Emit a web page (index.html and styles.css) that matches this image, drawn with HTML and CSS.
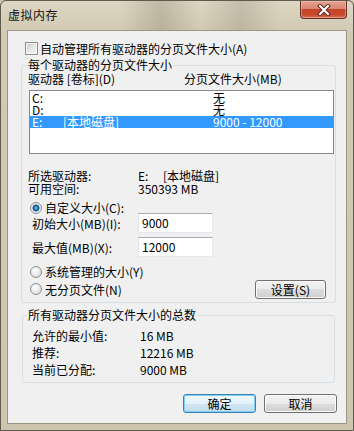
FILE: index.html
```html
<!DOCTYPE html>
<html lang="zh-CN">
<head>
<meta charset="utf-8">
<title>虚拟内存</title>
<link rel="stylesheet" href="styles.css">
</head>
<body>
<div class="window">
  <div class="titlebar">
    <span class="title">虚拟内存</span>
    <div class="close">
      <svg width="14" height="12" viewBox="0 0 14 12">
        <path d="M3 2 L11 10 M11 2 L3 10" stroke="#5a2a20" stroke-width="4" stroke-linecap="square"/>
        <path d="M3 2 L11 10 M11 2 L3 10" stroke="#ffffff" stroke-width="2" stroke-linecap="square"/>
      </svg>
    </div>
  </div>
  <div class="client">
    <div class="check-row"><span class="checkbox"></span><span>自动管理所有驱动器的分页文件大小(A)</span></div>

    <fieldset class="group g1">
      <legend>每个驱动器的分页文件大小</legend>
      <div class="cols"><span class="c1">驱动器 [卷标](D)</span><span>分页文件大小(MB)</span></div>
      <div class="list">
        <div class="row"><span>C:</span><span></span><span>无</span></div>
        <div class="row"><span>D:</span><span></span><span>无</span></div>
        <div class="row sel"><span>E:</span><span>[本地磁盘]</span><span>9000 - 12000</span></div>
      </div>
      <div class="info first"><span class="lab">所选驱动器:</span><span class="drv">E:</span><span>[本地磁盘]</span></div>
      <div class="info"><span class="lab">可用空间:</span><span>350393 MB</span></div>
      <div class="radio-row custom"><span class="radio on"></span><span>自定义大小(C):</span></div>
      <div class="field-row"><span class="flab">初始大小(MB)(I):</span><span class="input">9000</span></div>
      <div class="field-row second"><span class="flab">最大值(MB)(X):</span><span class="input">12000</span></div>
      <div class="radio-row sys"><span class="radio"></span><span>系统管理的大小(Y)</span></div>
      <div class="radio-row nopage"><span class="radio"></span><span>无分页文件(N)</span><span class="btn set">设置(S)</span></div>
    </fieldset>

    <fieldset class="group g2">
      <legend>所有驱动器分页文件大小的总数</legend>
      <div class="sum"><span class="slab">允许的最小值:</span><span>16 MB</span></div>
      <div class="sum"><span class="slab">推荐:</span><span>12216 MB</span></div>
      <div class="sum"><span class="slab">当前已分配:</span><span>9000 MB</span></div>
    </fieldset>

    <div class="buttons">
      <span class="btn default">确定</span>
      <span class="btn">取消</span>
    </div>
  </div>
</div>
</body>
</html>
```
FILE: styles.css
```css
html, body {
  margin: 0;
  padding: 0;
  background: #cfc7b0;
}
body {
  font-family: "Noto Sans CJK SC", "Noto Sans", sans-serif;
  font-size: 12px;
  color: #000;
}
.window {
  box-sizing: border-box;
  width: 354px;
  height: 431px;
  border: 1px solid #5e5a4e;
  border-radius: 6px 6px 0 0;
  background: linear-gradient(180deg, #ddd6c2 0px, #d2cab3 30px, #cdc5ad 100%);
  padding: 0 6px 6px 6px;
  display: flex;
  flex-direction: column;
}
.titlebar {
  height: 29px;
  display: flex;
  align-items: flex-start;
  justify-content: space-between;
  margin: 0 -6px 0 -6px;
  padding: 0 6px 0 7px;
  background: linear-gradient(90deg, rgba(0,0,0,0) 0px, rgba(0,0,0,0) 120px, rgba(110,100,80,0.25) 160px, rgba(0,0,0,0) 200px, rgba(100,95,80,0.2) 240px, rgba(0,0,0,0) 280px);
}
.title {
  margin-top: 6px;
  line-height: 16px;
  font-size: 12px;
  letter-spacing: 0.5px;
  color: #111;
}
.close {
  width: 45px;
  height: 17px;
  border: 1px solid #6a3026;
  border-top: none;
  border-radius: 0 0 4px 4px;
  background: linear-gradient(180deg, #e6a596 0%, #d98672 45%, #c4462c 50%, #c9482c 80%, #d8735c 100%);
  box-shadow: inset 0 0 0 1px rgba(255,200,180,0.45);
  display: flex;
  align-items: center;
  justify-content: center;
}
.client {
  box-sizing: border-box;
  width: 340px;
  height: 394px;
  border: 1px solid #9c9684;
  background: #f0f0f0;
  padding-top: 11px;
  display: flex;
  flex-direction: column;
}
.check-row {
  height: 13px;
  display: flex;
  align-items: center;
  margin-left: 17px;
  line-height: 13px;
}
.checkbox {
  box-sizing: border-box;
  width: 13px;
  height: 13px;
  border: 1px solid #8e8f8f;
  background: linear-gradient(135deg, #cbcbcb 0%, #e6e6e6 50%, #f6f6f6 100%);
  box-shadow: inset 0 0 0 1px #f8f8f8;
  margin-right: 2px;
}
.group {
  border: 1px solid #d5dfe5;
  border-radius: 3px;
  padding: 0;
  min-width: 0;
}
.group legend {
  padding: 0 1px;
  line-height: 14px;
  height: 14px;
}
.g1 {
  margin: 3px 10px 0 13px;
  padding-bottom: 3px;
}
.g1 legend {
  margin-left: 5px;
}
.cols {
  height: 14px;
  line-height: 14px;
  display: flex;
  padding-left: 6px;
}
.cols .c1 {
  width: 156px;
}
.list {
  box-sizing: border-box;
  height: 64px;
  margin: 4px 1px 0 7px;
  border: 1px solid #828790;
  background: #fff;
  padding-top: 1px;
}
.row {
  height: 12px;
  line-height: 12px;
  display: grid;
  grid-template-columns: 31px 150px 1fr;
  padding-left: 2px;
}
.row.sel {
  background: #3399ff;
  color: #fff;
}
.info {
  height: 13px;
  line-height: 13px;
  display: flex;
  padding-left: 6px;
}
.info.first {
  margin-top: 15px;
}
.info .lab {
  width: 110px;
}
.info .drv {
  width: 25px;
}
.radio-row {
  display: flex;
  align-items: center;
  padding-left: 8px;
}
.radio {
  box-sizing: border-box;
  width: 12px;
  height: 12px;
  border-radius: 50%;
  border: 1px solid #8e8f8f;
  background: radial-gradient(circle at 40% 35%, #ffffff 0%, #e4e4e4 60%, #cfcfcf 100%);
  margin-right: 3px;
  flex: none;
}
.radio.on {
  background: radial-gradient(circle at 50% 50%, #7fc4ef 0px, #1f6fae 2px, #0f4f86 3.2px, #e8e8e8 3.8px, #f4f4f4 100%);
}
.radio-row.custom {
  margin-top: 6px;
  height: 13px;
  line-height: 13px;
}
.field-row {
  display: flex;
  align-items: center;
  height: 20px;
  padding-left: 10px;
  margin-top: -1px;
}
.field-row.second {
  margin-top: 4px;
}
.flab {
  width: 106px;
}
.input {
  box-sizing: border-box;
  width: 75px;
  height: 20px;
  border: 1px solid #e3e9ef;
  border-top-color: #abadb3;
  border-left-color: #e2e3ea;
  background: #fff;
  padding-left: 3px;
  line-height: 18px;
}
.radio-row.sys {
  margin-top: 9px;
  height: 12px;
  line-height: 12px;
}
.radio-row.nopage {
  margin-top: 1px;
  height: 20px;
}
.btn {
  box-sizing: border-box;
  display: flex;
  align-items: center;
  justify-content: center;
  height: 19px;
  border: 1px solid #707070;
  border-radius: 3px;
  background: linear-gradient(180deg, #f2f2f2 0%, #ebebeb 50%, #dddddd 50%, #cfcfcf 100%);
  box-shadow: inset 0 0 0 1px #fbfbfb;
  line-height: 17px;
}
.btn.set {
  width: 71px;
  margin-left: auto;
  margin-right: 9px;
}
.g2 {
  margin: 5px 11px 0 14px;
  padding: 5px 0 4px 0;
}
.g2 legend {
  margin-left: 4px;
}
.sum {
  height: 17px;
  line-height: 17px;
  display: flex;
  padding-left: 9px;
}
.sum .slab {
  width: 108px;
}
.buttons {
  display: flex;
  justify-content: flex-end;
  gap: 8px;
  margin: 11px 9px 0 0;
}
.buttons .btn {
  width: 73px;
}
.btn.default {
  border-color: #3c7fb1;
  box-shadow: inset 0 0 0 1px #7fd0f4;
  background: linear-gradient(180deg, #eef7fc 0%, #e4f1fa 50%, #d2e6f3 50%, #c4dcec 100%);
}
```
